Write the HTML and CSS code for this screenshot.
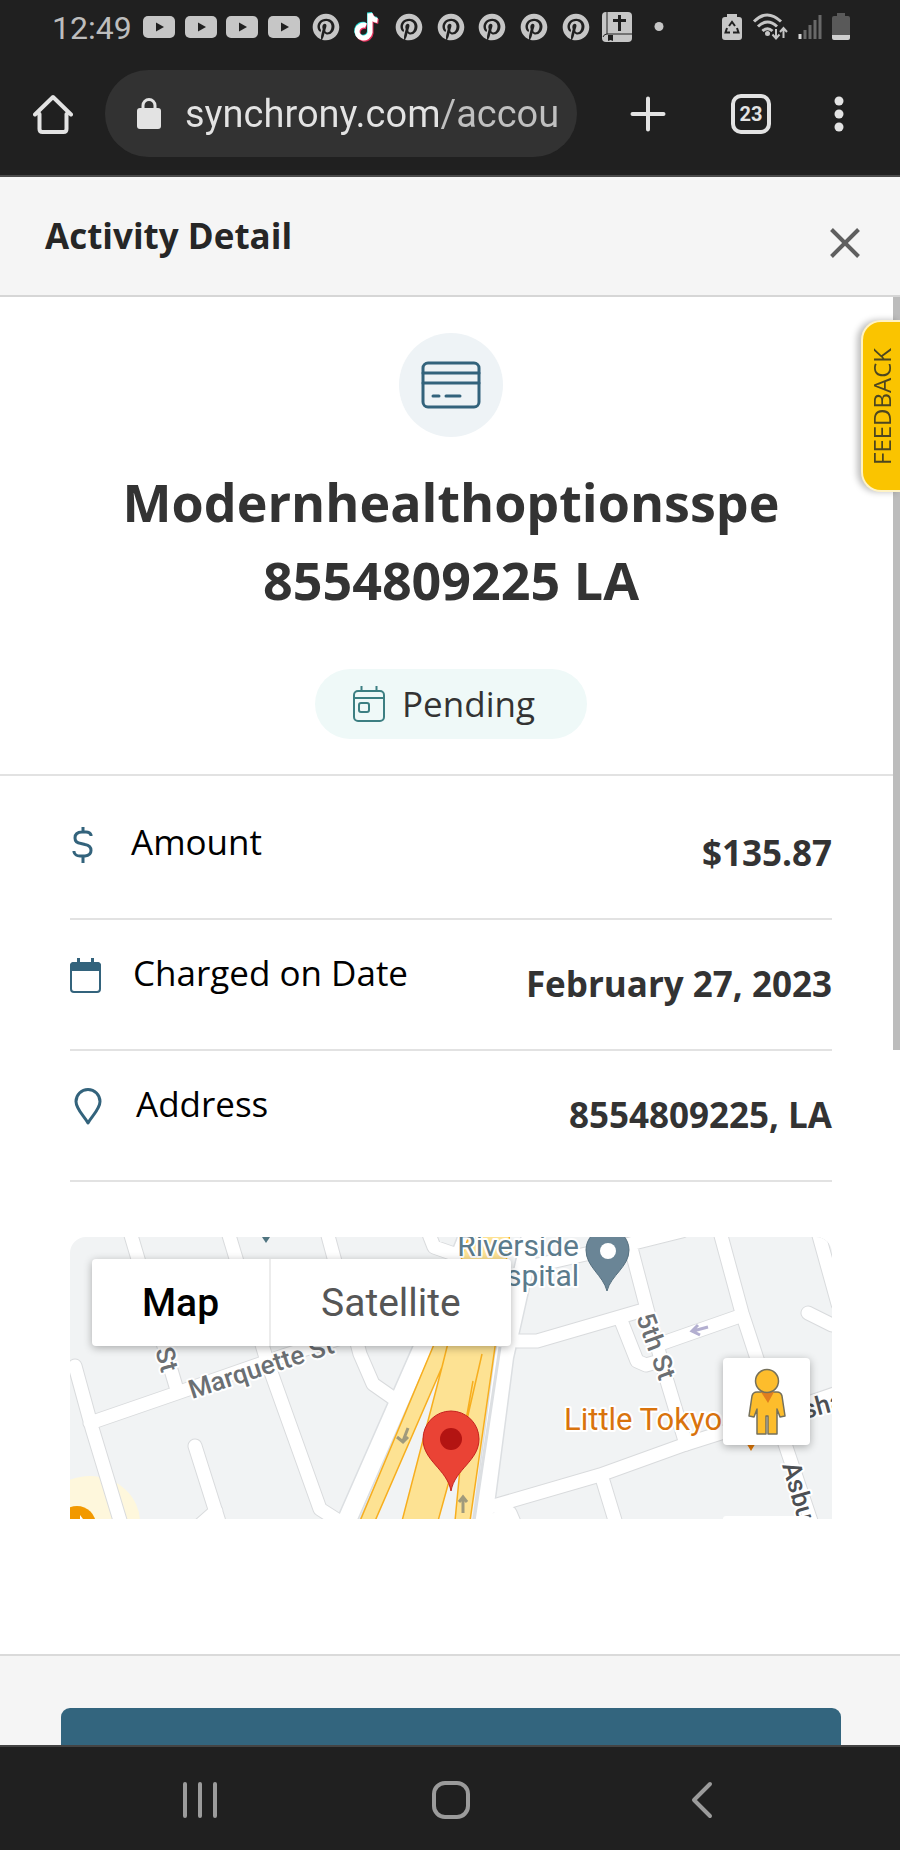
FILE: index.html
```html
<!DOCTYPE html>
<html lang="en">
<head>
  <meta charset="UTF-8">
  <meta name="viewport" content="width=device-width, initial-scale=1.0">
  <title>Activity Detail</title>
  <link rel="stylesheet" href="styles.css">
</head>
<body>
  <!-- shared status icons -->
  <svg class="defs" width="0" height="0" aria-hidden="true">
    <symbol id="yt" viewBox="0 0 32 32">
      <rect x="0" y="5" width="32" height="22" rx="5" fill="#c6c6c6"/>
      <path d="M13 11.500v9l8-4.500z" fill="#202020"/>
    </symbol>
    <symbol id="pin" viewBox="0 0 24 24">
      <path fill="#c6c6c6" d="M12 2C6.480 2 2 6.480 2 12c0 4.240 2.640 7.850 6.360 9.310-.09-.79-.17-2 .03-2.870.180-.780 1.170-4.970 1.170-4.970s-.3-.6-.3-1.480c0-1.390.81-2.430 1.810-2.430.860 0 1.270.640 1.270 1.410 0 .860-.55 2.140-.83 3.330-.24 1 .5 1.810 1.480 1.810 1.780 0 3.140-1.870 3.140-4.580 0-2.390-1.720-4.070-4.180-4.070-2.840 0-4.510 2.130-4.510 4.340 0 .860.330 1.780.740 2.280.080.1.090.190.070.290-.070.310-.24.990-.28 1.130-.04.180-.15.220-.34.130-1.250-.58-2.030-2.400-2.030-3.870 0-3.150 2.290-6.040 6.600-6.040 3.460 0 6.160 2.470 6.160 5.770 0 3.440-2.170 6.210-5.180 6.210-1.010 0-1.960-.53-2.290-1.150l-.62 2.380c-.22.870-.83 1.960-1.240 2.620.930.290 1.920.450 2.950.450 5.520 0 10-4.480 10-10S17.520 2 12 2z"/>
    </symbol>
  </svg>

  <header class="phone-top">
    <div class="status">
      <span class="time">12:49</span>
      <div class="notifications">
        <svg><use href="#yt"/></svg>
        <svg><use href="#yt"/></svg>
        <svg><use href="#yt"/></svg>
        <svg><use href="#yt"/></svg>
        <svg><use href="#pin"/></svg>
        <svg viewBox="0 0 32 32">
          <path fill="none" stroke="#27e0d8" stroke-width="5" d="M14 13.500a6.500 6.500 0 1 0 4.500 7V1.500c1 4 3.500 6.500 7.500 7"/>
          <path fill="none" stroke="#e8305c" stroke-width="5" d="M15.500 15.500a6.500 6.500 0 1 0 4.500 7V3.500c1 4 3.500 6.500 7.500 7"/>
          <path fill="none" stroke="#fff" stroke-width="5" d="M15 14.500a6.500 6.500 0 1 0 4 7V2.500c1 4 3.500 6.500 7.500 7"/>
        </svg>
        <svg><use href="#pin"/></svg>
        <svg><use href="#pin"/></svg>
        <svg><use href="#pin"/></svg>
        <svg><use href="#pin"/></svg>
        <svg><use href="#pin"/></svg>
        <svg viewBox="0 0 32 32">
          <rect x="1" y="1" width="30" height="30" rx="4" fill="#c6c6c6"/>
          <path d="M6 1v22M2 26q1-3 4-3h25" fill="none" stroke="#202020" stroke-width="1"/>
          <path d="M18.500 4v16M12 9.500h13" stroke="#202020" stroke-width="3"/>
          <path d="M7 24h5v6l-2.500-1-2.500 1z" fill="#202020"/>
        </svg>
        <svg viewBox="0 0 32 32"><circle cx="16" cy="15.500" r="4.500" fill="#c6c6c6"/></svg>
      </div>
      <div class="system">
        <svg width="20" height="28" viewBox="0 0 20 28">
          <path fill="#c6c6c6" d="M5 1h10v3h2q3 0 3 3v17q0 3-3 3H3q-3 0-3-3V7q0-3 3-3h2z"/>
          <path fill="none" stroke="#202020" stroke-width="2" d="M7 13l3-4 3 4M5 15l-1.500 4.500H8M15 15l1.500 4.500H11"/>
        </svg>
        <svg width="36" height="28" viewBox="0 0 36 28">
          <g fill="none" stroke="#c6c6c6" stroke-width="3">
            <path d="M2 8.500q13-13 27 0M6 13.500q9.500-9 19 0M10.500 18q5-4.500 10 0"/>
          </g>
          <circle cx="15.500" cy="20.500" r="2.500" fill="#c6c6c6"/>
          <path d="M24 16v9M20.500 21.500l3.500 4 3.500-4M31.500 25v-9M28 19l3.500-4 3.500 4" fill="none" stroke="#c6c6c6" stroke-width="2"/>
        </svg>
        <svg width="24" height="28" viewBox="0 0 24 28">
          <path d="M2 21v5" stroke="#d8d8d8" stroke-width="3"/>
          <path d="M7 17v9M12 12v14M17 7v19M22 2v24" stroke="#686868" stroke-width="3"/>
        </svg>
        <svg width="18" height="28" viewBox="0 0 18 28">
          <path fill="#595959" d="M5 0h8v3h3q2 0 2 2v18H0V5q0-2 2-2h3z"/>
          <path fill="#d0d0d0" d="M0 22h18v3q0 2-2 2H2q-2 0-2-2z"/>
        </svg>
      </div>
    </div>

    <div class="toolbar">
      <button class="tool" aria-label="Home">
        <svg width="40" height="40" viewBox="0 0 40 40" fill="none" stroke="#e3e3e3" stroke-width="4" stroke-linejoin="round" stroke-linecap="round">
          <path d="M2 20.500L20 3l18 17.500M6.500 20v15q0 3 3 3h21q3 0 3-3V20"/>
        </svg>
      </button>
      <label class="address">
        <svg width="24" height="32" viewBox="0 0 24 32">
          <path d="M6 12V7.500a6 6 0 0 1 12 0V12" fill="none" stroke="#e3e3e3" stroke-width="3"/>
          <rect x="0" y="10" width="24" height="21" rx="3" fill="#e3e3e3"/>
        </svg>
        <input class="url" type="text" value="synchrony.com/accou" aria-label="Address">
      </label>
      <button class="tool" aria-label="New tab">
        <svg width="36" height="36" viewBox="0 0 36 36"><path d="M18 2.500v31M2.500 18h31" stroke="#e3e3e3" stroke-width="4" stroke-linecap="round"/></svg>
      </button>
      <button class="tool tabs" aria-label="Tabs">23</button>
      <button class="tool" aria-label="More">
        <svg width="12" height="36" viewBox="0 0 12 36" fill="#e3e3e3"><circle cx="6" cy="5" r="4.500"/><circle cx="6" cy="18" r="4.500"/><circle cx="6" cy="31" r="4.500"/></svg>
      </button>
    </div>
  </header>

  <div class="modal-header">
    <h1>Activity Detail</h1>
    <button class="close" aria-label="Close">
      <svg width="30" height="30" viewBox="0 0 30 30"><path d="M1.500 1.500l27 27M28.500 1.500l-27 27" stroke="#5f5f5f" stroke-width="4"/></svg>
    </button>
  </div>

  <main class="modal-body">
    <section class="summary">
      <div class="circle">
        <svg width="60" height="48" viewBox="0 0 60 48" fill="none" stroke="#33637c" stroke-width="3" stroke-linecap="round">
          <rect x="2" y="2" width="56" height="44" rx="5"/>
          <path d="M2 12h56M2 22h56M12 35h6M25 35h14"/>
        </svg>
      </div>
      <h2>Modernhealthoptionsspe<br>8554809225 LA</h2>
      <span class="badge">
        <svg width="32" height="36" viewBox="0 0 32 36" fill="none" stroke="#3c7f82" stroke-width="2">
          <rect x="1" y="5" width="30" height="30" rx="4"/>
          <path d="M1 12h30M8.500 0v5M23.500 0v5"/>
          <rect x="6" y="17" width="10" height="9" rx="2"/>
        </svg>
        Pending
      </span>
    </section>

    <dl class="details">
      <div class="row">
        <dt>
          <svg width="29" height="48" viewBox="0 0 29 48" fill="none" stroke="#33637c" stroke-width="3">
            <path d="M21 18v-1q-1-3-5-3h-4q-7 0-7 6 0 5 6 5.500l4 1q6 1 6 6 0 5-6 5.500h-5q-5 0-6-4v-1M13 9v5M13 38v7"/>
          </svg>
          Amount
        </dt>
        <dd>$135.87</dd>
      </div>
      <div class="row">
        <dt>
          <svg width="31" height="48" viewBox="0 0 31 48">
            <rect x="1" y="14" width="29" height="29" rx="3" fill="none" stroke="#33637c" stroke-width="2"/>
            <path d="M0 22v-5q0-4 4-4h23q4 0 4 4v5z" fill="#33637c"/>
            <path d="M8.500 9v6M22.500 9v6" stroke="#33637c" stroke-width="3"/>
          </svg>
          Charged on Date
        </dt>
        <dd>February 27, 2023</dd>
      </div>
      <div class="row">
        <dt>
          <svg width="34" height="48" viewBox="0 0 34 48">
            <path d="M18 43C14 36 6 29 6 21.500a12 12 0 0 1 24 0C30 29 22 36 18 43z" fill="none" stroke="#33637c" stroke-width="3" stroke-linejoin="round"/>
          </svg>
          Address
        </dt>
        <dd>8554809225, LA</dd>
      </div>
    </dl>

    <div class="map">
      <svg class="map-canvas" viewBox="0 0 762 282" preserveAspectRatio="xMidYMid slice">
        <defs>
          <g id="roads" fill="none" stroke-linecap="round" stroke-linejoin="round">
            <path d="M5 129L22 191L52 290M20 186L107 156L213 119L290 95M60 -5L107 153M158 -5L197 124L250 272L272 286M257 -5L290 117L303 147L323 161M357 -8L364 10L384 17M125 209L150 288M130 288L146 274"/>
            <path d="M560 7L577 72L597 144L616 207M463 29L560 7L612 -6M447 104L467 104L577 72M550 81L567 124L576 128L590 124M590 107L670 79M650 -5L672 76L713 201L743 290M748 -5L768 67M738 76L762 88"/>
            <path d="M413 272L530 238L616 207L657 194L770 155M533 244L547 290M417 286L440 276L446 290"/>
          </g>
          <g id="main-roads" fill="none" stroke-linecap="round">
            <path d="M274 290L353 110L400 -5M412 290L434 120L462 -5"/>
          </g>
        </defs>
        <rect width="762" height="282" fill="#f1f3f4"/>
        <ellipse cx="20" cy="285" rx="50" ry="46" fill="#fef7dc"/>
        <use href="#roads" stroke="#d9dbdd" stroke-width="15"/>
        <use href="#main-roads" stroke="#dcdfe2" stroke-width="21"/>
        <use href="#roads" stroke="#fff" stroke-width="13"/>
        <use href="#main-roads" stroke="#fff" stroke-width="18"/>
        <path d="M290 284L367 110M404 284L430 110" fill="none" stroke="#dcdfe2" stroke-width="3"/>

        <!-- highway -->
        <path d="M290 284L365 105L400 -5H440L425 110L400 284H385L394 190L368 284H332L372 130L305 284z" fill="#fde293" stroke="#f7ae1e" stroke-width="1.500"/>
        <path d="M378 106L372 130M412 117L393 200M403 144L393 200" fill="none" stroke="#f7ae1e" stroke-width="1.500"/>
        <path d="M338 191l-5 13M327 200l6 5 5-5M393 276v-15M389 265l4-5 4 5" fill="none" stroke="#a09a7c" stroke-width="3"/>
        <path d="M638 90l-15 4M628 88l-6 6 8 4" fill="none" stroke="#b3afd0" stroke-width="3"/>

        <g class="street">
          <text transform="translate(122 162) rotate(-18)">Marquette St</text>
          <text transform="translate(85 113) rotate(74)">St</text>
          <text transform="translate(566 80) rotate(70)">5th St</text>
          <text class="dark" transform="translate(712 228) rotate(74)">Asbu</text>
          <text class="dark" transform="translate(735 182) rotate(-15)">sha</text>
        </g>
        <g class="place">
          <text class="hospital" x="509" y="19">Riverside</text>
          <text class="hospital" x="509" y="49">spital</text>
          <text class="food" x="494" y="193">Little Tokyo</text>
        </g>
        <path d="M537 54C533 38 516 30 516 13a21.500 21.500 0 0 1 43 0C559 30 541 38 537 54z" fill="#6a8596" stroke="#56707f"/>
        <circle cx="538" cy="14" r="8" fill="#fff"/>
        <path d="M192 0h8l-4 6z" fill="#4f7480"/>
        <path d="M675 204h12l-6 10z" fill="#e37a08"/>
        <circle cx="7" cy="288" r="19" fill="#f29900"/>
        <path d="M10 282v-4l3 4z" fill="#fff"/>
        <path d="M381 254C377 232 353 224 353 202a28 28 0 0 1 56 0C409 224 385 232 381 254z" fill="#ea4335" stroke="#c5221f"/>
        <circle cx="381" cy="202" r="11" fill="#b31412"/>
        <rect x="653" y="279" width="87" height="10" rx="3" fill="#fff"/>
      </svg>
      <div class="map-types">
        <button class="active">Map</button>
        <button>Satellite</button>
      </div>
      <button class="pegman" aria-label="Street View">
        <svg width="38" height="68" viewBox="0 0 38 68" fill="#fdbd2c" stroke="#75705a" stroke-width="1.500" stroke-linejoin="round">
          <path d="M9 24h20q4 0 5 4l3 20-5 1-3-8v25H20V48h-2v18H9V41l-3 8-5-1 3-20q1-4 5-4z"/>
          <path d="M13 24h13l-6 11z" fill="#e07d1f" stroke="none"/>
          <circle cx="19" cy="13" r="11.500"/>
        </svg>
      </button>
    </div>
  </main>

  <footer class="modal-footer">
    <button class="primary" aria-label="Continue"></button>
  </footer>

  <button class="feedback"><span>FEEDBACK</span></button>
  <div class="scroll-thumb"></div>

  <nav class="phone-nav">
    <button aria-label="Recent apps">
      <svg width="36" height="40" viewBox="0 0 36 40"><path d="M3 4v32M18 4v32M33 4v32" stroke="#9b9b9b" stroke-width="4" stroke-linecap="round"/></svg>
    </button>
    <button aria-label="Home">
      <svg width="40" height="40" viewBox="0 0 40 40"><rect x="3" y="3" width="34" height="34" rx="11" fill="none" stroke="#9b9b9b" stroke-width="4"/></svg>
    </button>
    <button aria-label="Back">
      <svg width="24" height="40" viewBox="0 0 24 40"><path d="M20 4L4 20l16 16" fill="none" stroke="#9b9b9b" stroke-width="4" stroke-linecap="round" stroke-linejoin="round"/></svg>
    </button>
  </nav>
</body>
</html>
```
FILE: styles.css
```css
* {
  box-sizing: border-box;
}
body {
  margin: 0;
  height: 100vh;
  display: flex;
  flex-direction: column;
  position: relative;
  overflow: hidden;
  font-family: 'Open Sans', sans-serif;
  font-size: 35px;
  line-height: 48px;
  color: #333;
  background: #fff;
}
button, input {
  font: inherit;
  color: inherit;
  border: none;
  background: none;
  margin: 0;
  padding: 0;
}
svg {
  display: block;
  flex: none;
}
.defs {
  position: absolute;
}

/* phone status bar and browser toolbar */
.phone-top {
  flex: none;
  background: #202020;
  border-bottom: 2px solid #4a4a4a;
  font-family: Roboto, sans-serif;
}
.status {
  display: flex;
  align-items: center;
  height: 54px;
  padding: 0 50px 0 52px;
}
.time {
  width: 86px;
  font-size: 32px;
  color: #bdbdbd;
  padding-top: 2px;
}
.notifications {
  flex: 1;
  max-width: 542px;
  display: grid;
  grid-template-columns: repeat(13, 1fr);
  justify-items: center;
}
.notifications svg {
  width: 32px;
  height: 32px;
}
.system {
  display: flex;
  gap: 10px;
  margin-left: auto;
}
.toolbar {
  display: flex;
  align-items: center;
  padding: 16px 55px 18px 33px;
}
.tool {
  flex: none;
  display: flex;
  justify-content: center;
  align-items: center;
}
.address {
  flex: 1;
  min-width: 0;
  display: flex;
  align-items: center;
  gap: 24px;
  height: 87px;
  margin: 0 53px 0 32px;
  padding: 0 12px 0 32px;
  border-radius: 44px;
  background: #323232;
}
.url {
  flex: 1;
  min-width: 0;
  height: 56px;
  font-size: 38px;
  background: linear-gradient(90deg, #e3e3e3 254px, #c0c0c0 254px);
  background-clip: text;
  -webkit-background-clip: text;
  color: transparent;
}
.tabs {
  width: 40px;
  height: 40px;
  margin: 0 62px 0 65px;
  border: 4px solid #e3e3e3;
  border-radius: 10px;
  color: #e3e3e3;
  font-size: 20px;
  font-weight: 700;
}

/* modal */
.modal-header {
  flex: none;
  display: flex;
  justify-content: space-between;
  align-items: center;
  height: 120px;
  padding: 0 40px 0 45px;
  background: #f5f5f5;
  border-bottom: 2px solid #d6d6d6;
}
h1 {
  margin: 0;
  font-size: 35px;
  color: #262626;
}
.close {
  padding-top: 14px;
}
.modal-body {
  flex: 1;
  min-height: 0;
  overflow: hidden;
}
.summary {
  display: flex;
  flex-direction: column;
  align-items: center;
  padding: 36px 0 35px 2px;
  border-bottom: 2px solid #e2e2e2;
}
.circle {
  display: flex;
  justify-content: center;
  align-items: center;
  width: 104px;
  height: 104px;
  border-radius: 50%;
  background: #eef3f6;
}
h2 {
  margin: 26px 0 50px;
  font-size: 52px;
  line-height: 78px;
  text-align: center;
}
.badge {
  display: flex;
  align-items: center;
  gap: 17px;
  height: 70px;
  padding: 0 52px 0 38px;
  border-radius: 35px;
  background: #eff9f8;
}
.details {
  margin: 0 68px 0 70px;
  padding-top: 13px;
}
.row {
  display: flex;
  justify-content: space-between;
  padding: 29px 0 41px;
  border-bottom: 2px solid #e2e2e2;
}
dt {
  display: flex;
  gap: 32px;
  color: #000;
}
dd {
  margin: 11px 0 0;
  font-weight: 700;
}

/* map */
.map {
  position: relative;
  height: 282px;
  margin: 55px 68px 0 70px;
  border-radius: 16px 16px 0 0;
  overflow: hidden;
  font-family: Roboto, sans-serif;
}
.map-canvas {
  width: 100%;
  height: 100%;
}
.map-canvas text {
  font-family: Roboto, sans-serif;
  paint-order: stroke;
  stroke: #fff;
  stroke-width: 4px;
  stroke-linejoin: round;
}
.street text {
  font-size: 26px;
  font-weight: 500;
  fill: #6b6f73;
}
.street .dark {
  fill: #4d5054;
}
.place .hospital {
  font-size: 30px;
  text-anchor: end;
  fill: #5b7b8c;
}
.place .food {
  font-size: 31px;
  fill: #d9730d;
}
.map-types {
  position: absolute;
  top: 22px;
  left: 22px;
  display: flex;
  height: 87px;
  border-radius: 4px;
  background: #fff;
  box-shadow: 0 2px 8px rgba(0,0,0,0.3);
}
.map-types button {
  padding: 0 50px;
  font-size: 39px;
  color: #565656;
}
.map-types .active {
  font-weight: 500;
  color: #000;
  border-right: 2px solid #ececec;
}
.pegman {
  position: absolute;
  right: 22px;
  top: 121px;
  display: flex;
  justify-content: center;
  align-items: center;
  width: 87px;
  height: 87px;
  border-radius: 4px;
  background: #fff;
  box-shadow: 0 2px 8px rgba(0,0,0,0.3);
}

.modal-footer {
  flex: none;
  height: 91px;
  padding: 52px 59px 0 61px;
  overflow: hidden;
  background: #f5f5f5;
  border-top: 2px solid #dadada;
}
.primary {
  display: block;
  width: 100%;
  height: 104px;
  border-radius: 9px;
  background: #33657e;
}

/* floating over the page */
.scroll-thumb {
  position: absolute;
  top: 297px;
  right: 0;
  width: 7px;
  height: 753px;
  background: #bcbcbc;
}
.feedback {
  position: absolute;
  z-index: 1;
  top: 320px;
  right: 0;
  width: 39px;
  height: 172px;
  border: 2px solid #fff3c4;
  border-right: none;
  border-radius: 20px 0 0 20px;
  background: #fac400;
  box-shadow: -4px 0 6px rgba(0,0,0,0.25);
  font-size: 24px;
  line-height: 36px;
  color: #4c4620;
}
.feedback span {
  display: block;
  writing-mode: vertical-rl;
  transform: rotate(180deg);
  margin: 0 auto;
}

.phone-nav {
  flex: none;
  display: grid;
  grid-template-columns: repeat(3, 1fr);
  height: 105px;
  padding: 2px 72px 0 74px;
  background: #202020;
  border-top: 2px solid #444;
}
.phone-nav button {
  display: flex;
  justify-content: center;
  align-items: center;
}
```
